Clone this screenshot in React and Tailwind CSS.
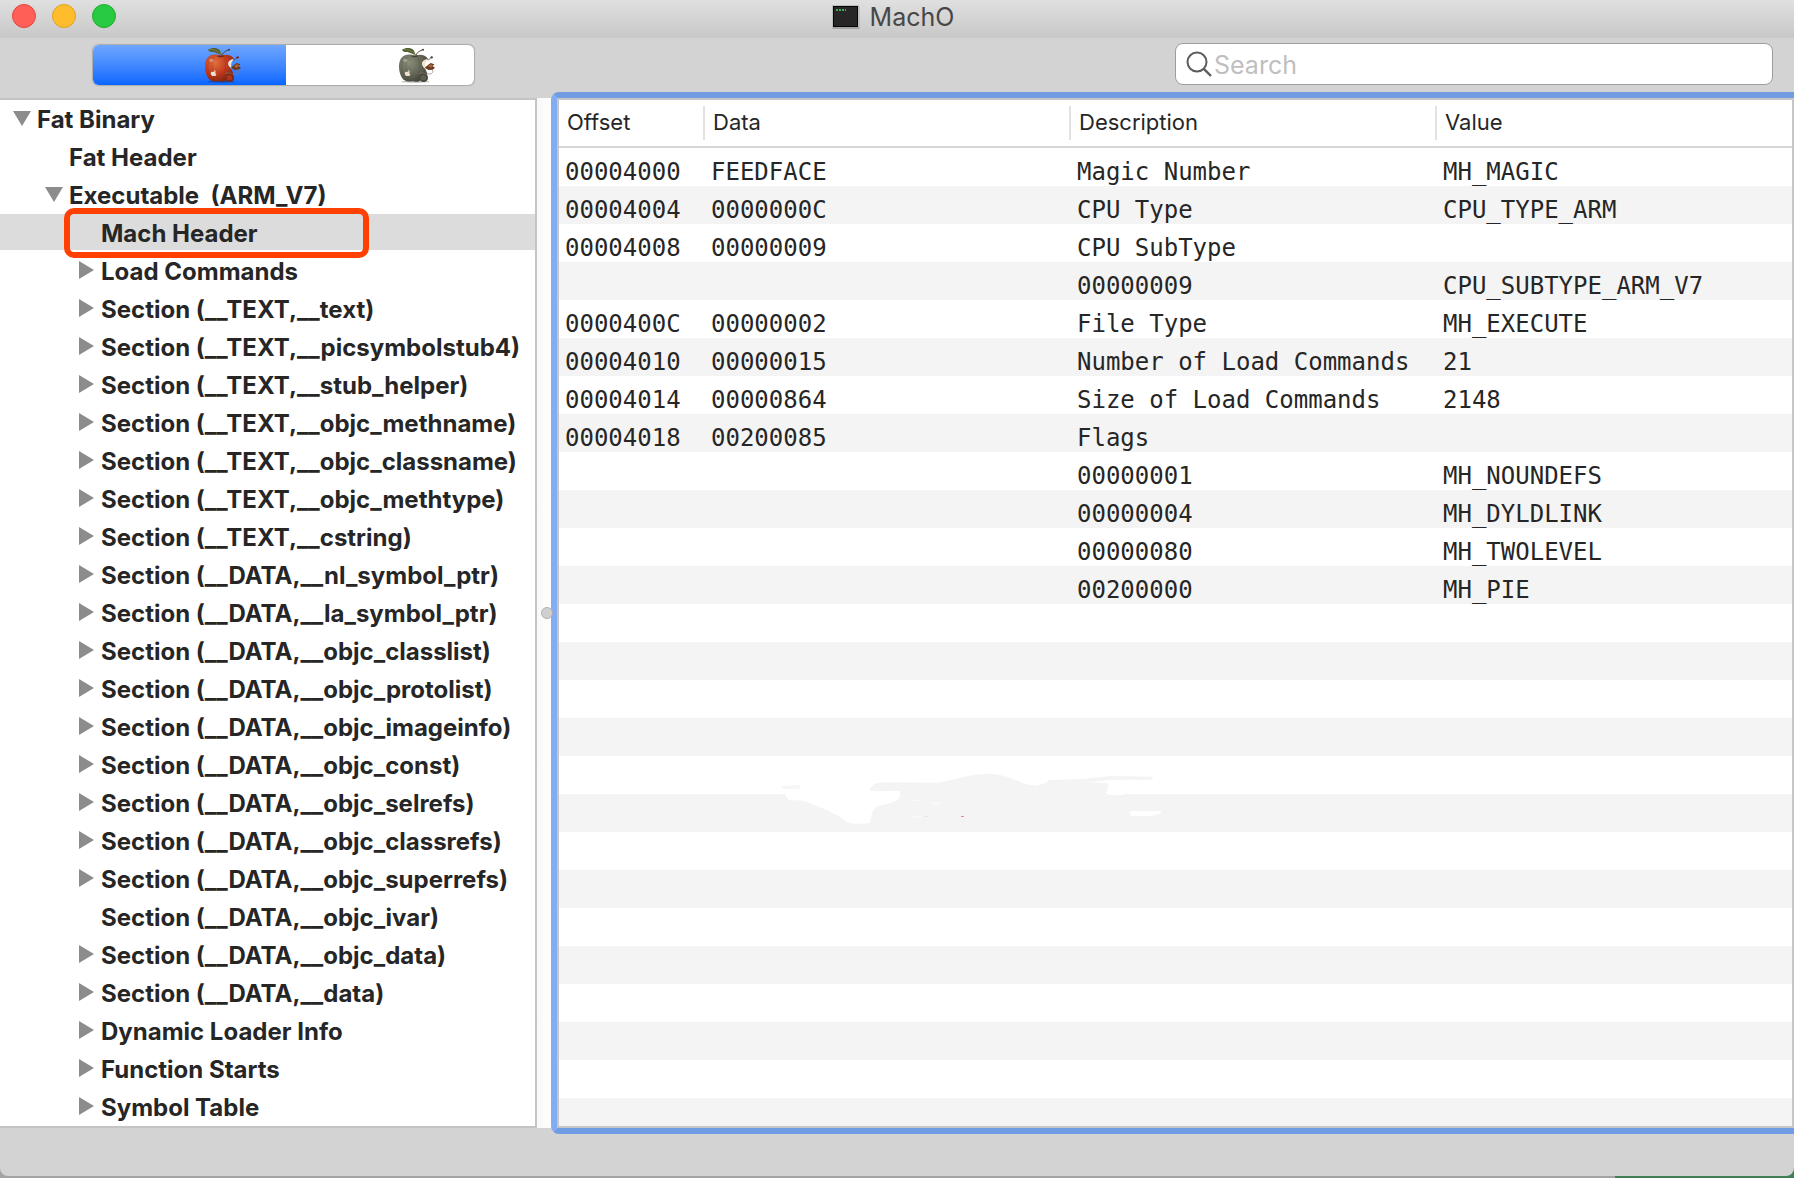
import React, { useState } from 'react';
import clsx from 'clsx';

const TREE = [
  { label: 'Fat Binary', depth: 0, state: 'open' },
  { label: 'Fat Header', depth: 1 },
  { label: 'Executable  (ARM_V7)', depth: 1, state: 'open' },
  { label: 'Mach Header', depth: 2, marked: true },
  { label: 'Load Commands', depth: 2, state: 'closed' },
  { label: 'Section (__TEXT,__text)', depth: 2, state: 'closed' },
  { label: 'Section (__TEXT,__picsymbolstub4)', depth: 2, state: 'closed' },
  { label: 'Section (__TEXT,__stub_helper)', depth: 2, state: 'closed' },
  { label: 'Section (__TEXT,__objc_methname)', depth: 2, state: 'closed' },
  { label: 'Section (__TEXT,__objc_classname)', depth: 2, state: 'closed' },
  { label: 'Section (__TEXT,__objc_methtype)', depth: 2, state: 'closed' },
  { label: 'Section (__TEXT,__cstring)', depth: 2, state: 'closed' },
  { label: 'Section (__DATA,__nl_symbol_ptr)', depth: 2, state: 'closed' },
  { label: 'Section (__DATA,__la_symbol_ptr)', depth: 2, state: 'closed' },
  { label: 'Section (__DATA,__objc_classlist)', depth: 2, state: 'closed' },
  { label: 'Section (__DATA,__objc_protolist)', depth: 2, state: 'closed' },
  { label: 'Section (__DATA,__objc_imageinfo)', depth: 2, state: 'closed' },
  { label: 'Section (__DATA,__objc_const)', depth: 2, state: 'closed' },
  { label: 'Section (__DATA,__objc_selrefs)', depth: 2, state: 'closed' },
  { label: 'Section (__DATA,__objc_classrefs)', depth: 2, state: 'closed' },
  { label: 'Section (__DATA,__objc_superrefs)', depth: 2, state: 'closed' },
  { label: 'Section (__DATA,__objc_ivar)', depth: 2 },
  { label: 'Section (__DATA,__objc_data)', depth: 2, state: 'closed' },
  { label: 'Section (__DATA,__data)', depth: 2, state: 'closed' },
  { label: 'Dynamic Loader Info', depth: 2, state: 'closed' },
  { label: 'Function Starts', depth: 2, state: 'closed' },
  { label: 'Symbol Table', depth: 2, state: 'closed' },
];

const ROWS = [
  ['00004000', 'FEEDFACE', 'Magic Number', 'MH_MAGIC'],
  ['00004004', '0000000C', 'CPU Type', 'CPU_TYPE_ARM'],
  ['00004008', '00000009', 'CPU SubType', ''],
  ['', '', '00000009', 'CPU_SUBTYPE_ARM_V7'],
  ['0000400C', '00000002', 'File Type', 'MH_EXECUTE'],
  ['00004010', '00000015', 'Number of Load Commands', '21'],
  ['00004014', '00000864', 'Size of Load Commands', '2148'],
  ['00004018', '00200085', 'Flags', ''],
  ['', '', '00000001', 'MH_NOUNDEFS'],
  ['', '', '00000004', 'MH_DYLDLINK'],
  ['', '', '00000080', 'MH_TWOLEVEL'],
  ['', '', '00200000', 'MH_PIE'],
];

const INDENT = ['pl-[13px]', 'pl-[45px]', 'pl-[77px]'];

function Apple({ id, light, mid, dark }) {
  return (
    <svg className="h-9 w-[38px]" viewBox="0 0 114 108" fill="none" aria-hidden="true">
      <defs>
        <radialGradient id={id} cx="0.35" cy="0.3" r="0.75">
          <stop offset="0" stopColor={light} />
          <stop offset="0.55" stopColor={mid} />
          <stop offset="1" stopColor={dark} />
        </radialGradient>
      </defs>
      <ellipse cx="52" cy="104" rx="42" ry="3" fill="#000" opacity="0.3" />
      <path d="M50 27C36 19 17 22 8 36C0 50 2 76 12 92C18 102 30 106 44 102C54 106 64 104 70 98L88 80L82 66C72 58 70 48 76 42L90 36C82 24 66 20 50 27Z" fill={`url(#${id})`} />
      <path d="M18 36C12 44 9 60 14 76M28 30C22 48 24 72 30 90M60 30C66 46 66 72 58 94" stroke={dark} strokeWidth="2" opacity="0.35" />
      <ellipse cx="22" cy="40" rx="7" ry="5" fill="#fff" opacity="0.3" />
      <path d="M38 27C44 32 56 32 62 27C56 25 46 25 38 27Z" fill={dark} />
      <path d="M89 36C74 38 69 48 75 58L85 67C80 56 80 48 89 36Z" fill="#f4e3c6" />
      <path d="M80 62L90 54L98 48L109 52L104 58L111 62L104 68L92 69Z" fill="#6b3a1e" />
      <path d="M90 58L98 52L106 55L98 62Z" fill="#a8683a" />
      <path d="M88 38C93 40 96 34 99 32" stroke={dark} strokeWidth="2.5" />
      <circle cx="101" cy="31" r="3.5" fill={dark} />
      <path d="M53 29C54 20 60 14 72 9" stroke="#4a3a28" strokeWidth="3" strokeLinecap="round" />
      <circle cx="75" cy="8" r="3" fill="#4a3a28" />
      <path d="M12 8C22 0 40 2 46 8C50 13 50 18 54 25C44 22 38 17 28 15C20 15 14 14 12 8Z" fill="#536232" />
      <path d="M16 8C30 6 42 12 51 22" stroke="#8a9558" strokeWidth="1.5" />
      <circle cx="77" cy="92" r="13" fill={dark} />
      <ellipse cx="76" cy="92" rx="9" ry="8" fill={mid} opacity="0.7" />
      <path d="M62 80C74 74 90 84 100 80C106 76 105 70 102 66" stroke="#8d776d" strokeWidth="2" />
      <path d="M28 75C22 72 19 76 21 82C23 88 26 88 29 86C33 88 37 86 37 82C33 80 33 76 36 74C33 72 30 73 28 75Z" fill="#eee2cc" />
      <path d="M29 73Q30 69 34 68Q33 72 29 73Z" fill="#eee2cc" />
    </svg>
  );
}

function TerminalIcon() {
  return (
    <svg className="h-6 w-7" viewBox="0 0 28 24" aria-hidden="true">
      <rect x="0.5" y="1" width="27" height="23" fill="#000" opacity="0.2" />
      <rect x="0" y="0" width="27" height="22" fill="#b9c0c0" />
      <rect x="1" y="1" width="25" height="21" fill="#050505" />
      <rect x="2" y="2" width="23" height="19" fill="#262626" />
      <path d="M4 5h2M7 5h2M10 5h2M13 5h1" stroke="#3fae54" strokeWidth="2" />
    </svg>
  );
}

function Disclosure({ state }) {
  if (state === 'open') {
    return (
      <svg className="h-[15px] w-[18px]" viewBox="0 0 18 15" aria-hidden="true">
        <path d="M0 0H18L9 15Z" fill="#8c8c8c" />
      </svg>
    );
  }
  return (
    <svg className="ml-0.5 h-[18px] w-[15px]" viewBox="0 0 15 18" aria-hidden="true">
      <path d="M0 0V18L15 9Z" fill="#8c8c8c" />
    </svg>
  );
}

function TitleBar() {
  return (
    <header className="relative flex h-[38px] shrink-0 items-center justify-center bg-linear-to-b from-[#e0e0e0] to-[#c8c8c8]">
      <div className="absolute left-3 top-1 flex gap-4">
        <button aria-label="Close" className="size-6 rounded-full border border-[#e2463f] bg-[#ff5f57]" />
        <button aria-label="Minimize" className="size-6 rounded-full border border-[#dfa123] bg-[#ffbd2e]" />
        <button aria-label="Zoom" className="size-6 rounded-full border border-[#1dad2b] bg-[#28ca41]" />
      </div>
      <h1 className="flex items-center gap-2.5 pb-1 pr-2 text-[25px] leading-8 text-[#474747]">
        <TerminalIcon />
        MachO
      </h1>
    </header>
  );
}

function Toolbar() {
  const [mode, setMode] = useState('raw');
  const active = 'bg-linear-to-b from-[#6ea6ff] to-[#0566ff]';

  return (
    <div className="flex h-[60px] shrink-0 items-start justify-between pl-[93px] pr-[21px] pt-[5px]">
      <div className="mt-0.5 flex h-10 w-[381px] overflow-hidden rounded-md bg-white shadow-[0_0_1px_1px_#a9a9a9]">
        <button
          aria-label="RAW"
          onClick={() => setMode('raw')}
          className={clsx('flex flex-1 items-center justify-end pr-11', mode === 'raw' && active)}
        >
          <Apple id="red-apple" light="#e0713f" mid="#c23a1c" dark="#7c2513" />
        </button>
        <button
          aria-label="RVA"
          onClick={() => setMode('rva')}
          className={clsx('flex w-[188px] items-center justify-end pr-[38px]', mode === 'rva' && active)}
        >
          <Apple id="green-apple" light="#8b8d78" mid="#66695a" dark="#45453a" />
        </button>
      </div>
      <label className="flex h-[42px] w-[598px] items-center rounded-lg border border-[#9d9d9d] bg-white pl-2.5">
        <svg className="size-[26px]" viewBox="0 0 26 26" fill="none" stroke="#5c5c5c" aria-hidden="true">
          <circle cx="11" cy="11" r="9.5" strokeWidth="2" />
          <path d="M17.8 17.8L25 25" strokeWidth="2.4" />
        </svg>
        <input
          type="text"
          aria-label="Search"
          placeholder="Search"
          className="min-w-0 flex-1 bg-transparent pl-0.5 pt-0.5 text-[25px] leading-8 outline-none placeholder:text-[#bfbfbf]"
        />
      </label>
    </div>
  );
}

function Sidebar() {
  const [selected, setSelected] = useState('Mach Header');

  return (
    <nav className="w-[537px] shrink-0 overflow-hidden border-y-2 border-r-2 border-[#c4c4c4] bg-white">
      <ul className="flex flex-col gap-0.5">
        {TREE.map((item) => (
          <li key={item.label} className={clsx('relative h-9', selected === item.label && 'bg-[#dcdcdc]')}>
            <button
              onClick={() => setSelected(item.label)}
              className={clsx('flex h-9 w-full items-center text-2xl font-bold text-[#262626]', INDENT[item.depth])}
            >
              <span className="flex w-6 shrink-0">{item.state && <Disclosure state={item.state} />}</span>
              <span className="whitespace-pre pt-1">{item.label}</span>
            </button>
            {item.marked && (
              <span className="pointer-events-none absolute -top-1.5 left-16 z-10 h-[50px] w-[305px] rounded-[10px] border-[6px] border-[#ff4000]" />
            )}
          </li>
        ))}
      </ul>
    </nav>
  );
}

// Leftovers of an erased watermark on the striped background
function Smudge() {
  return (
    <svg className="pointer-events-none absolute left-[221px] top-[672px] h-[60px] w-[384px]" viewBox="120 96 1152 180" aria-hidden="true">
      <path
        d="M390 152C395 130 410 125 450 127L590 128C640 122 680 102 745 101C800 103 820 120 850 127L930 120L1010 118L1080 112L1110 108L1240 110L1235 119L1115 119L1045 127L1105 130L1100 165L470 165Z"
        fill="#f4f4f4"
      />
      <path d="M830 120L925 121L920 128L890 137L855 132Z" fill="#fff" />
      <path d="M125 138L180 134L178 147L130 147Z" fill="#f6f6f6" />
      <path
        d="M130 155L145 180L190 182C240 200 290 220 325 248Q345 253 385 250C400 240 385 220 410 200C440 190 475 190 480 165L480 153Z"
        fill="#fff"
      />
      <path d="M1095 155H1180L1150 164L1105 165Z" fill="#fff" />
      <path d="M1170 213L1260 213L1265 220L1235 228L1172 228Z" fill="#fff" />
      <path d="M515 181h28M573 190h28M515 230h28" stroke="#fafafa" strokeWidth="4" />
      <rect x="553" y="228" width="9" height="3" fill="#ecdcdc" />
      <rect x="663" y="228" width="9" height="3" fill="#df8f8f" />
    </svg>
  );
}

function HeaderTable() {
  return (
    <main className="relative z-10 -my-1.5 min-w-0 flex-1 overflow-hidden rounded-l-lg border-y-[6px] border-l-[6px] border-y-[#6f9ce2] border-l-[#82adf5]">
      <div className="relative h-full overflow-hidden border-2 border-[#c6c6c8] bg-[linear-gradient(to_bottom,#fff_50%,#f4f4f4_50%)] bg-[length:100%_76px] bg-[position:0_48px]">
        <table className="w-full table-fixed border-separate border-spacing-0 text-left text-[#262626]">
          <colgroup>
            <col className="w-36" />
            <col className="w-[366px]" />
            <col className="w-[366px]" />
            <col />
          </colgroup>
          <thead>
            <tr className="text-[22px] leading-8">
              {['Offset', 'Data', 'Description', 'Value'].map((name, i) => (
                <th key={name} className="h-12 border-b-2 border-[#d6d6d6] bg-white p-0 font-normal">
                  <div className={clsx('h-[34px] pl-2', i > 0 && 'border-l-2 border-[#e2e2e2]')}>{name}</div>
                </th>
              ))}
            </tr>
          </thead>
          <tbody className="font-['DejaVu_Sans_Mono',monospace] text-2xl leading-7">
            {ROWS.map((row, i) => (
              <tr key={i}>
                {row.map((cell, j) => (
                  <td key={j} className={clsx('h-[38px] whitespace-nowrap pt-2.5 align-top', j === 0 ? 'pl-1.5' : 'pl-2')}>
                    {cell}
                  </td>
                ))}
              </tr>
            ))}
          </tbody>
        </table>
        <Smudge />
      </div>
    </main>
  );
}

function App() {
  return (
    <div className="h-screen bg-linear-to-r from-[#a5a2a3] from-90% to-[#3f8055] to-90% pb-0.5 font-['Inter','Liberation_Sans',sans-serif]">
      <div className="flex h-full flex-col overflow-hidden rounded-b-lg bg-[#d3d3d3]">
        <TitleBar />
        <Toolbar />
        <div className="flex min-h-0 flex-1">
          <Sidebar />
          <div className="relative z-20 flex w-3.5 shrink-0 items-center bg-linear-to-r from-[#f8f8f8] to-white pl-1">
            <span className="size-3 shrink-0 rounded-full border border-[#b0b0b0] bg-[#cfcfcf]" />
          </div>
          <HeaderTable />
        </div>
        <footer className="h-12 shrink-0" />
      </div>
    </div>
  );
}

export default App;
